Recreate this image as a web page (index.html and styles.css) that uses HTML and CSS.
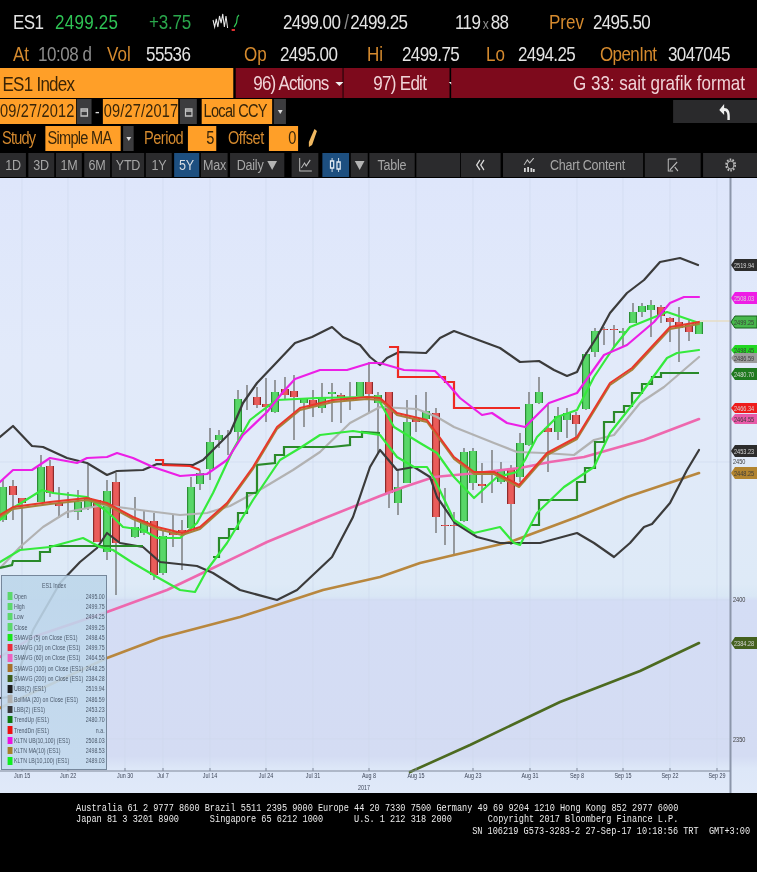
FILE: index.html
```html
<!DOCTYPE html>
<html lang="en">
<head>
<meta charset="utf-8">
<title>ES1 Index</title>
<link rel="stylesheet" href="styles.css">
</head>
<body>
<div class="screen">
  <header class="quote">
    <div class="row r1">
      <span class="w">ES1</span>
      <span class="g">2499.25</span>
      <span class="g2">+3.75</span>
      <svg class="spark" viewBox="0 0 34 22"><path class="pw" d="M0 9l2 7 2-8 2 8 2-11 2 7 2-9 2 13 2-11 2 12"/><path class="sg" d="M26 16l3-4 1-6 2-2"/><path class="sr" d="M23 19h4"/></svg>
      <span class="bid"><span class="w">2499.00</span><span class="dim sl">/</span><span class="w">2499.25</span></span>
      <span class="sz"><span class="w">119</span><span class="dim x">x</span><span class="w">88</span></span>
      <span class="o">Prev</span>
      <span class="w">2495.50</span>
    </div>
    <div class="row r2">
      <span class="o">At</span>
      <span class="dim">10:08 d</span>
      <span class="o">Vol</span>
      <span class="w">55536</span>
      <span class="o">Op</span>
      <span class="w">2495.00</span>
      <span class="o">Hi</span>
      <span class="w">2499.75</span>
      <span class="o">Lo</span>
      <span class="w">2494.25</span>
      <span class="o oi">OpenInt</span>
      <span class="w">3047045</span>
    </div>
    <div class="row r3">
      <div class="title">ES1 Index</div>
      <div class="mbtn act"><span>96) Actions</span><i class="caret"></i></div>
      <div class="mbtn edit"><span>97) Edit</span><i class="caret"></i></div>
      <div class="mbtn note">G 33: sait grafik format</div>
    </div>
    <div class="row r4">
      <div class="inp d1">09/27/2012</div>
      <div class="tool cal"><svg viewBox="0 0 10 10"><path class="ci" d="M1 2h8v7H1zM1 4h8"/></svg></div>
      <span class="dash">-</span>
      <div class="inp d2">09/27/2017</div>
      <div class="tool cal c2"><svg viewBox="0 0 10 10"><path class="ci" d="M1 2h8v7H1zM1 4h8"/></svg></div>
      <div class="inp ccy">Local CCY</div>
      <div class="tool drop"><i class="mini"></i></div>
      <div class="tool back"><svg viewBox="0 0 16 18"><path class="arrow" d="M1 7l6-6v4c5 0 7 3 7 8v4h-3v-4c0-3-1-5-4-5v4z"/></svg></div>
    </div>
    <div class="row r5">
      <span class="olab s1">Study</span>
      <div class="inp ma">Simple MA</div>
      <div class="tool drop d5"><i class="mini"></i></div>
      <span class="olab s2">Period</span>
      <div class="inp num n1">5</div>
      <span class="olab s3">Offset</span>
      <div class="inp num n2">0</div>
      <svg class="pencil" viewBox="0 0 11 20"><path class="pen" d="M8 1l3 2-6 14-4 2 0-5z"/></svg>
    </div>
    <div class="row r6">
      <button class="b w26">1D</button>
      <button class="b w26">3D</button>
      <button class="b w26">1M</button>
      <button class="b w26">6M</button>
      <button class="b w32">YTD</button>
      <button class="b w26">1Y</button>
      <button class="b w25 on">5Y</button>
      <button class="b w27">Max</button>
      <button class="b w54">Daily <em class="tri"></em></button>
      <button class="b w26 ml8"><svg class="ico" viewBox="0 0 16 14"><path class="il" d="M1 0v13h15M3 10l4-5 2 3 5-6"/></svg></button>
      <button class="b w27 on ml4"><svg class="ico" viewBox="0 0 16 14"><path class="il2" d="M4 0v14M12 0v14"/><rect class="ir" x="2" y="3" width="4" height="7"/><rect class="ir" x="10" y="4" width="4" height="7"/></svg></button>
      <button class="b w17 tight"><em class="tri"></em></button>
      <button class="b w46 tight">Table</button>
      <button class="b w44 tight"></button>
      <button class="b w40"><svg class="ico small" viewBox="0 0 12 12"><path class="il3" d="M5 1L1 6l4 5M10 1L6 6l4 5"/></svg></button>
      <button class="b w140"><svg class="ico cc" viewBox="0 0 14 14"><path class="il" d="M1 7l4-5 3 3 5-5"/><path class="il4" d="M2 10v4M6 9v5M10 10v4M13 11v3"/></svg>Chart Content</button>
      <button class="b w56"><svg class="ico" viewBox="0 0 14 14"><path class="il" d="M1 1h10M1 1v12h6M3 12L12 4M9 9l4 4"/></svg></button>
      <button class="b w56 tight"><svg class="ico" viewBox="0 0 14 14"><circle class="il" cx="7" cy="7" r="4"/><circle class="gear" cx="7" cy="7" r="5.6"/></svg></button>
    </div>
  </header>

  <main class="chart">
    <svg class="plot" viewBox="0 178 757 615">
      <defs>
        <path id="gb" d="M3 487V520M41 467V502M88 498V508M78 502V512M107 491V552M135 527V537M144 521V533M163 536V573M191 487V528M200 473V484M210 442V469M219 435V440M238 399V432M275 392V412M304 398V403M322 397V408M332 392V394M350 398V400M360 382V396M378 395V403M398 487V503M407 422V483M426 411V419M464 452V521M473 451V483M492 472V473M501 470V482M520 443V477M529 404V445M539 392V403M558 416V432M567 413V420M586 354V409M595 331V352M623 331V333M633 312V323M642 306V312M651 305V310M699 322V334"/>
        <path id="rb" d="M13 486V495M22 498V503M50 466V493M59 503V506M97 500V542M116 482V543M154 521V575M173 532V535M182 530V533M257 397V405M266 404V407M285 389V395M294 391V397M313 400V407M341 395V398M369 382V394M389 392V493M416 419V422M436 413V517M445 525V526M454 525V526M482 484V486M511 469V504M548 428V432M576 415V424M604 329V330M614 329V330M661 307V316M670 318V322M679 322V328M689 325V332"/>
      </defs>
      <path class="grid" d="M22 178V770M68 178V770M125 178V770M163 178V770M210 178V770M266 178V770M313 178V770M369 178V770M416 178V770M473 178V770M530 178V770M577 178V770M623 178V770M670 178V770M717 178V770M0 462H730M0 600H730M0 739H730"/>
      <path class="last" d="M699 321H730"/>
      <path class="wick" d="M3 480V522M13 480V520M22 498V550M41 455V500M50 460V497M59 487V518M68 492V518M78 490V520M88 465V510M107 480V560M116 473V595M135 497V538M144 510V535M154 513V580M163 530V575M173 515V547M182 520V570M191 477V530M200 470V490M210 428V480M219 430V448M228 430V455M238 390V440M247 385V410M257 387V408M266 378V422M275 380V413M285 377V400M294 375V440M304 400V427M313 390V417M322 383V413M332 383V422M341 393V423M350 382V410M369 362V412M378 392V453M389 392V508M398 470V515M407 400V483M416 395V432M426 392V420M436 408V533M445 488V545M454 512V556M464 448V522M473 448V490M482 463V503M492 450V493M501 462V484M511 465V545M520 433V482M529 392V446M539 377V404M548 405V472M558 407V440M567 408V438M576 412V437M586 352V410M595 328V357M604 327V345M614 325V348M623 328V347M633 303V323M642 303V317M651 300V337M661 305V323M670 317V342M679 307V362M689 319V341"/>
      <use href="#gb" class="gedge"/><use href="#gb" class="gfill"/>
      <use href="#rb" class="redge"/><use href="#rb" class="rfill"/>
      <polyline class="l olive" points="410,772 470,745 560,702 640,671 699,643"/>
      <polyline class="l brown" points="0,708 107,658 160,638 240,617 323,590 380,577 420,563 454,555 510,542 577,517 627,497 699,473"/>
      <polyline class="l pink" points="0,657 33,637 107,612 167,590 213,568 267,542 320,520 380,496 404,487 434,477 477,473 520,468 550,462 584,457 644,440 699,419"/>
      <polyline class="l grey" points="0,568 20,547 43,527 67,512 103,505 140,510 180,515 207,513 230,506 263,488 293,470 320,452 350,423 380,407 417,409 437,417 454,427 494,443 517,452 544,453 574,455 594,440 614,435 640,403 664,387 699,357"/>
      <polyline class="l blk" points="0,437 13,426 32,446 43,447 67,458 87,463 107,475 117,471 143,470 157,464 193,465 203,460 213,450 230,433 243,403 257,383 277,362 295,343 312,337 332,327 343,337 360,345 370,357 380,365 387,358 399,352 426,353 440,338 454,331 500,348 520,362 539,361 554,370 567,376 577,372 584,357 597,337 610,313 627,293 644,280 660,262 680,258 698,265"/>
      <polyline class="l blk" points="0,698 10,697 33,630 60,583 80,562 97,548 107,533 120,543 143,547 160,562 197,566 213,573 240,590 277,600 297,590 332,557 353,517 370,467 380,450 397,470 414,467 430,477 437,497 455,523 477,537 500,543 540,543 577,533 594,543 614,557 630,543 644,527 652,524 670,503 687,470 699,450"/>
      <polyline class="l step dk" points="0,568 12,565 13,561 40,561 40,552 50,552 50,546 143,546"/>
      <polyline class="l step dk" points="213,557 219,557 219,538 229,538 229,529 238,529 238,513 247,513 247,493 257,493 257,465 275,463 275,455 284,455 284,447 332,447 350,445 350,437 362,437 362,432 380,433"/>
      <polyline class="l step dk" points="530,525 539,525 539,500 577,500 577,482 585,482 585,468 595,468 595,442 604,442 604,422 614,422 614,412 624,412 624,406 632,406 632,393 642,393 642,384 652,384 652,377 661,377 661,373 699,373"/>
      <polyline class="l lime" points="0,562 20,550 50,547 83,538 100,547 113,550 133,563 157,577 180,590 195,592 207,570 227,543 253,500 280,460 300,448 320,435 353,431 380,435 397,457 414,467 427,467 435,480 454,520 474,533 500,527 514,543 520,545 537,513 564,487 594,467 610,433 640,395 667,358 677,353 699,350"/>
      <polyline class="l lime" points="0,520 13,508 42,490 53,493 87,497 105,510 113,517 123,527 143,530 157,538 180,538 197,523 213,493 233,450 250,420 267,407 277,400 317,398 367,397 377,397 394,427 420,443 437,453 454,477 474,498 497,477 517,472 525,460 537,437 557,417 577,410 594,377 614,347 630,327 667,312 699,323"/>
      <polyline class="l tan" points="0,517 13,509 50,504 87,500 107,505 133,519 157,529 182,535 200,529 227,505 253,469 277,429 300,410 333,402 367,399 380,400 397,415 427,422 454,459 474,474 494,474 519,487 547,455 577,439 610,385 632,370 670,329 699,324"/>
      <polyline class="l red" points="0,515 13,507 50,502 87,498 107,503 133,517 157,527 182,533 200,527 227,503 253,467 277,427 300,408 333,400 367,397 380,398 397,413 427,420 454,457 474,472 494,472 519,485 547,453 577,437 610,383 632,368 670,327 699,322"/>
      <polyline class="l step red2" points="155,460 163,460 163,465 190,466 200,470"/>
      <polyline class="l step red2" points="389,347 398,347 398,377 445,377 445,382 454,382 454,408 520,408"/>
      <polyline class="l magenta" points="0,482 13,470 32,470 50,458 77,463 87,458 107,457 117,453 133,458 153,467 180,476 207,474 227,460 243,435 267,412 283,392 295,379 320,370 347,370 370,363 380,363 404,370 435,371 447,383 460,398 482,415 492,413 507,423 525,427 549,403 577,393 604,355 627,345 654,322 670,303 684,297 699,297"/>

      <path class="axis" d="M730.500 178V793"/>
      <path class="ticks" d="M0 771H730M22 771v-3M68 771v-3M125 771v-3M163 771v-3M210 771v-3M266 771v-3M313 771v-3M369 771v-3M416 771v-3M473 771v-3M530 771v-3M577 771v-3M623 771v-3M670 771v-3M717 771v-3"/>

      <g class="tags">
        <path class="t-blk" d="M731 265l4-6h22v12h-22z"/><text class="tt light" x="734" y="268">2519.94</text>
        <path class="t-mag" d="M731 298l4-6h22v12h-22z"/><text class="tt light" x="734" y="301">2508.03</text>
        <path class="t-grn" d="M731 322l4-6h22v12h-22z"/><text class="tt dark" x="734" y="325">2499.25</text>
        <path class="t-lim" d="M731 350l4-5h22v10h-22z"/><text class="tt dark" x="734" y="353">2498.45</text>
        <path class="t-gry" d="M731 358l4-5h22v10h-22z"/><text class="tt dark" x="734" y="361">2486.59</text>
        <path class="t-dgn" d="M731 374l4-6h22v12h-22z"/><text class="tt light" x="734" y="377">2480.70</text>
        <path class="t-red" d="M731 408l4-5h22v10h-22z"/><text class="tt light" x="734" y="411">2466.34</text>
        <path class="t-pnk" d="M731 419l4-5h22v10h-22z"/><text class="tt dark" x="734" y="422">2464.55</text>
        <path class="t-blk" d="M731 451l4-6h22v12h-22z"/><text class="tt light" x="734" y="454">2453.23</text>
        <path class="t-brn" d="M731 473l4-6h22v12h-22z"/><text class="tt dark" x="734" y="476">2448.25</text>
        <path class="t-olv" d="M731 643l4-6h22v12h-22z"/><text class="tt light" x="734" y="646">2384.28</text>
        <text class="tt dark" x="733" y="464">2450</text>
        <text class="tt dark" x="733" y="602">2400</text>
        <text class="tt dark" x="733" y="742">2350</text>
      </g>
      <g class="dates">
        <text x="22" y="778">Jun 15</text><text x="68" y="778">Jun 22</text><text x="125" y="778">Jun 30</text><text x="163" y="778">Jul 7</text><text x="210" y="778">Jul 14</text><text x="266" y="778">Jul 24</text><text x="313" y="778">Jul 31</text><text x="369" y="778">Aug 8</text><text x="416" y="778">Aug 15</text><text x="473" y="778">Aug 23</text><text x="530" y="778">Aug 31</text><text x="577" y="778">Sep 8</text><text x="623" y="778">Sep 15</text><text x="670" y="778">Sep 22</text><text x="717" y="778">Sep 29</text><text x="364" y="790">2017</text>
      </g>
    </svg>

    <aside class="legend">
      <div class="lg-in">
        <div class="lg-title">ES1 Index</div>
        <div class="lg-row"><i class="swatch c-op"></i><span>Open</span><b>2495.00</b></div>
        <div class="lg-row"><i class="swatch c-op"></i><span>High</span><b>2499.75</b></div>
        <div class="lg-row"><i class="swatch c-op"></i><span>Low</span><b>2494.25</b></div>
        <div class="lg-row"><i class="swatch c-op"></i><span>Close</span><b>2499.25</b></div>
        <div class="lg-row"><i class="swatch c-lime"></i><span>SMAVG (5) on Close (ES1)</span><b>2498.45</b></div>
        <div class="lg-row"><i class="swatch c-red"></i><span>SMAVG (10) on Close (ES1)</span><b>2499.75</b></div>
        <div class="lg-row"><i class="swatch c-pink"></i><span>SMAVG (60) on Close (ES1)</span><b>2464.55</b></div>
        <div class="lg-row"><i class="swatch c-brown"></i><span>SMAVG (100) on Close (ES1)</span><b>2448.25</b></div>
        <div class="lg-row"><i class="swatch c-olive"></i><span>SMAVG (200) on Close (ES1)</span><b>2384.28</b></div>
        <div class="lg-row"><i class="swatch c-blk"></i><span>UBB(2) (ES1)</span><b>2519.94</b></div>
        <div class="lg-row"><i class="swatch c-grey"></i><span>BollMA (20) on Close (ES1)</span><b>2486.59</b></div>
        <div class="lg-row"><i class="swatch c-dgrey"></i><span>LBB(2) (ES1)</span><b>2453.23</b></div>
        <div class="lg-row"><i class="swatch c-dgreen"></i><span>TrendUp (ES1)</span><b>2480.70</b></div>
        <div class="lg-row"><i class="swatch c-bred"></i><span>TrendDn (ES1)</span><b>n.a.</b></div>
        <div class="lg-row"><i class="swatch c-mag"></i><span>KLTN UB(10,100) (ES1)</span><b>2508.03</b></div>
        <div class="lg-row"><i class="swatch c-gold"></i><span>KLTN MA(10) (ES1)</span><b>2498.53</b></div>
        <div class="lg-row"><i class="swatch c-blime"></i><span>KLTN LB(10,100) (ES1)</span><b>2489.03</b></div>
      </div>
    </aside>
  </main>

  <footer class="foot">
    <div class="foot-in">
      <div class="fl">Australia 61 2 9777 8600 Brazil 5511 2395 9000 Europe 44 20 7330 7500 Germany 49 69 9204 1210 Hong Kong 852 2977 6000</div>
      <div class="fl">Japan 81 3 3201 8900      Singapore 65 6212 1000      U.S. 1 212 318 2000       Copyright 2017 Bloomberg Finance L.P.</div>
      <div class="fl sn">SN 106219 G573-3283-2 27-Sep-17 10:18:56 TRT  GMT+3:00</div>
    </div>
  </footer>
</div>
</body>
</html>
```
FILE: styles.css
```css
* { box-sizing: border-box; }
html, body { margin: 0; padding: 0; background: #000; }
body { width: 757px; height: 872px; overflow: hidden; }
.screen { width: 757px; height: 872px; overflow: hidden; display: flex; flex-direction: column; align-items: flex-start; filter: blur(0.45px); font-family: "Liberation Sans", Arial, sans-serif; }

/* The terminal's text is narrow: the header is laid out wide and squeezed to 81%. */
.quote { width: 934.6px; height: 178px; flex: none; background: #000; transform: scaleX(.81); transform-origin: 0 0; }
.row { display: flex; }
.r1, .r2 { display: grid; align-items: center; padding-left: 16px; font-size: 21px; white-space: nowrap; }
.r1 { height: 40px; padding-top: 3px; grid-template-columns: 52px 116px 75.3px 90.1px 212.3px 116px 54.3px 1fr; }
.r2 { height: 28px; grid-template-columns: 31px 85.2px 48.1px 121px 44.4px 107.4px 43.2px 103.7px 39.5px 101.2px 84px 1fr; }
.r3 { height: 30px; }
.r4 { height: 27px; margin-top: 1px; }
.r5 { height: 27px; }
.r6 { height: 25px; }

.w { color: #e4e4e4; letter-spacing: -.75px; }
.g { color: #2fc455; letter-spacing: .3px; }
.g2 { color: #2aa74c; letter-spacing: -.3px; }
.o { color: #d58a2e; }
.oi { letter-spacing: -.7px; }
.dim { color: #8d8d8d; letter-spacing: -.6px; }
.sl { margin: 0 2px 0 5px; }
.x { font-size: 15px; margin: 0 3px; }
.spark { width: 42px; height: 22px; }
.pw { fill: none; stroke: #e8e8e8; stroke-width: 1.3; }
.sg { fill: none; stroke: #2fc455; stroke-width: 1.5; }
.sr { fill: none; stroke: #e03030; stroke-width: 2; }

.title { width: 288.6px; height: 30px; background: #ff9f28; color: #3a2406; font-size: 21px; line-height: 31px; padding-left: 3px; letter-spacing: -.9px; }
.mbtn { height: 30px; background: #7d0a1c; color: #f0d4d8; font-size: 21px; display: flex; align-items: center; white-space: nowrap; }
.act { width: 132.1px; margin-left: 2.5px; padding-left: 22px; gap: 8px; letter-spacing: -1px; }
.edit { width: 130.9px; margin-left: 1.2px; padding-left: 37px; gap: 28px; letter-spacing: -.9px; }
.note { width: 377.8px; margin-left: 2.5px; padding-right: 14.8px; justify-content: flex-end; }
.caret { width: 0; height: 0; border: 5px solid transparent; border-top: 4px solid #f0f0f0; border-bottom: 0; margin-top: 2px; }

.inp { height: 25px; background: #ff9f28; color: #38260a; font-size: 18px; line-height: 25px; white-space: nowrap; }
.tool { height: 25px; background: #3c3c3e; display: flex; align-items: center; justify-content: center; }
.d1 { width: 93.8px; letter-spacing: .2px; }
.d2 { width: 92.6px; letter-spacing: .2px; padding-left: 1px; }
.cal { width: 18.5px; margin-left: 1.2px; }
.c2 { width: 21px; margin-left: 2.5px; }
.cal svg { width: 12px; height: 10px; }
.ci { fill: none; stroke: #c4c4c4; stroke-width: 1.5; }
.dash { width: 13.6px; color: #ddd; font-size: 17px; line-height: 25px; text-align: center; }
.ccy { width: 86.4px; margin-left: 6.2px; padding-left: 2px; letter-spacing: -.9px; }
.drop { width: 14.8px; margin-left: 2.5px; }
.mini { width: 0; height: 0; border: 3px solid transparent; border-top: 4px solid #ddd; border-bottom: 0; }
.back { width: 103.7px; height: 23px; margin-left: auto; margin-top: 1px; background: #2a2a2c; }
.back svg { width: 18px; height: 18px; margin-left: 25px; }
.arrow { fill: #eee; }

.olab { color: #d58a2e; font-size: 18px; line-height: 25px; white-space: nowrap; }
.s1 { width: 55.6px; padding-left: 2.5px; letter-spacing: -1px; }
.ma { width: 93.8px; padding-left: 3px; letter-spacing: -.9px; }
.d5 { margin-left: 2.5px; width: 13.6px; }
.s2 { margin-left: 12.3px; width: 54.3px; letter-spacing: -.6px; }
.num { text-align: right; padding-right: 2px; }
.n1 { width: 34.6px; }
.s3 { margin-left: 14.8px; width: 50.6px; letter-spacing: -.6px; }
.n2 { width: 35.8px; }
.pencil { width: 13.6px; height: 20px; margin-left: 11.1px; margin-top: 2px; }
.pen { fill: #f0b860; }

.b { height: 24px; padding: 0; border: 0; margin: 0 2.47px 0 0; background: #2b2b2d; color: #a6a6a6; font: 15.5px "Liberation Sans", Arial, sans-serif; letter-spacing: -.3px; display: flex; align-items: center; justify-content: center; flex: none; }
.b.tight { margin-right: 1.23px; }
.on { background: #1d4f80; color: #d8dde2; }
.w25 { width: 30.9px; } .w26 { width: 32.1px; } .w27 { width: 33.3px; } .w32 { width: 39.5px; }
.w54 { width: 66.7px; } .w17 { width: 21px; } .w46 { width: 56.8px; } .w44 { width: 54.3px; }
.w40 { width: 49.4px; } .w140 { width: 172.8px; } .w56 { width: 69.1px; }
.ml8 { margin-left: 7.4px; } .ml4 { margin-left: 2.5px; }
.tri { width: 0; height: 0; border: 6px solid transparent; border-top: 9px solid #b4b4b4; border-bottom: 0; margin-left: 5px; display: inline-block; }
.w17 .tri { margin-left: 0; }
.ico { width: 20px; height: 14px; }
.ico.small { width: 15px; height: 12px; }
.ico.cc { margin-right: 16px; }
.il { fill: none; stroke: #bdbdbd; stroke-width: 1.2; }
.il2 { stroke: #e6edf4; stroke-width: 1; }
.ir { fill: #1d4f80; stroke: #e6edf4; stroke-width: 1.5; }
.il3 { fill: none; stroke: #d6d6d6; stroke-width: 1.5; }
.il4 { fill: none; stroke: #d6d6d6; stroke-width: 2.2; }
.gear { fill: none; stroke: #bdbdbd; stroke-width: 2; stroke-dasharray: 2 1.5; }

.chart { position: relative; width: 757px; height: 615px; flex: none; background: linear-gradient(180deg, #dee6fb 0, #e2eafa 30%, #deeaf7 66%, #d9e7f5 68%, #d4ddf5 68.7%, #d4dcf3 94%, #dde7f8 96%, #e0e9f9 100%); }
.plot { display: block; width: 757px; height: 615px; }
.grid { fill: none; stroke: #cfd9ec; stroke-width: .6; }
.last { stroke: #e6dcc4; stroke-width: 1.5; }
.wick { fill: none; stroke: #6d6d6d; stroke-width: 1.3; }
.gedge { fill: none; stroke: #2c8f35; stroke-width: 8; }
.gfill { fill: none; stroke: #58d768; stroke-width: 5.6; }
.redge { fill: none; stroke: #8e2b2b; stroke-width: 8; }
.rfill { fill: none; stroke: #ea5c5a; stroke-width: 5.6; }
.l { fill: none; stroke-width: 2.2; stroke-linejoin: round; stroke-linecap: round; }
.step { stroke-linejoin: miter; stroke-linecap: butt; }
.olive { stroke: #4c6a20; stroke-width: 2.6; }
.brown { stroke: #b8873e; stroke-width: 2.6; }
.pink { stroke: #ee68ae; stroke-width: 2.6; }
.grey { stroke: #b2b2b2; }
.blk { stroke: #3b3b3b; }
.dk { stroke: #2a8a2a; }
.lime { stroke: #35ea3c; }
.tan { stroke: #a8813a; stroke-width: 2; }
.red { stroke: #e8382a; stroke-width: 2; }
.red2 { stroke: #ee2a22; }
.magenta { stroke: #ec1fe6; }
.axis { stroke: #8c96aa; stroke-width: 2; }
.ticks { fill: none; stroke: #7e8798; stroke-width: 1; }
.tt { font-size: 7px; transform-box: fill-box; transform-origin: 0 50%; transform: scaleX(.8); }
.tt.light { fill: #d8d8d8; }
.tt.dark { fill: #3a3a3a; }
.t-blk { fill: #2c2c2c; } .t-mag { fill: #ee1de6; } .t-grn { fill: #48b84d; stroke: #16601c; }
.t-lim { fill: #22d822; } .t-gry { fill: #9c9c9c; } .t-dgn { fill: #1f7a1f; } .t-red { fill: #ee1c1c; }
.t-pnk { fill: #e85aa8; } .t-brn { fill: #b2842f; } .t-olv { fill: #44601e; }
.dates text { font-size: 7.5px; fill: #3c4456; text-anchor: middle; transform-box: fill-box; transform-origin: 50% 50%; transform: scaleX(.72); }

.legend { position: absolute; left: 1px; top: 397px; width: 106px; height: 195px; overflow: hidden; background: linear-gradient(180deg, rgba(188,214,234,.88), rgba(196,218,238,.9)); border: 1px solid #76879b; font-size: 7.5px; color: #4c5a6c; }
.lg-in { width: 148.6px; padding-top: 4px; transform: scaleX(.7); transform-origin: 0 0; }
.lg-title { text-align: center; height: 11px; line-height: 11px; }
.lg-row { height: 10.3px; display: flex; align-items: center; white-space: nowrap; padding-left: 8px; padding-right: 2px; }
.lg-row span { flex: 1; margin-left: 2px; }
.lg-row b { font-weight: normal; flex: none; }
.swatch { width: 7px; height: 7.5px; flex: none; }
.c-op { background: #5cd86c; } .c-lime { background: #18e618; } .c-red { background: #ee2a3a; } .c-pink { background: #ee60c0; }
.c-brown { background: #a8722a; } .c-olive { background: #3c5c1c; } .c-blk { background: #1c1c1c; } .c-grey { background: #b0b0b0; }
.c-dgrey { background: #38383a; } .c-dgreen { background: #0e7a0e; } .c-bred { background: #ee1010; } .c-mag { background: #ee10e0; }
.c-gold { background: #a6802a; } .c-blime { background: #10ee20; }

.foot { flex: 1; width: 757px; background: #000; padding: 9px 0 0 76px; color: #eaeaea; overflow: hidden; }
.foot-in { width: 913px; transform: scaleX(.746); transform-origin: 0 0; font: 11.5px/11.4px "Liberation Mono", monospace; }
.fl { white-space: pre; }
.sn { padding-left: 531px; }
```
